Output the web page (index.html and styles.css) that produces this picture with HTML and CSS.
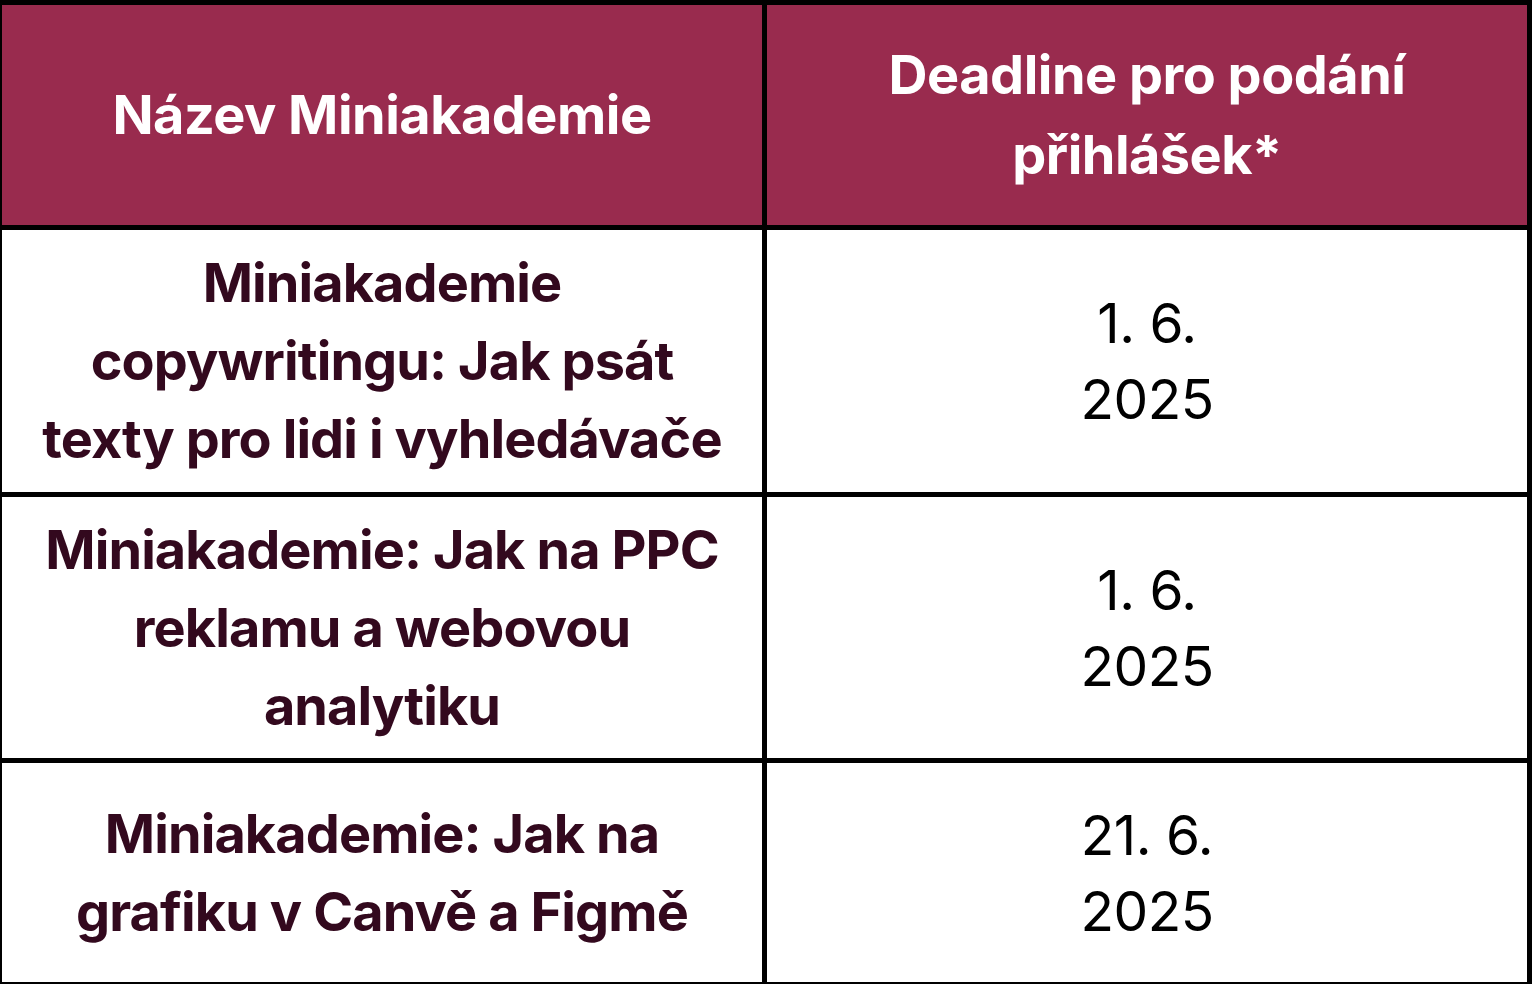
FILE: index.html
```html
<!DOCTYPE html>
<html lang="cs">
<head>
<meta charset="utf-8">
<title>Miniakademie</title>
<link rel="stylesheet" href="styles.css">
</head>
<body>
<div class="table" role="table">
  <div class="cell head" role="columnheader">Název Miniakademie</div>
  <div class="cell head" role="columnheader">Deadline pro podání<br>přihlášek*</div>
  <div class="cell name" role="cell">Miniakademie<br>copywritingu: Jak psát<br>texty pro lidi i vyhledávače</div>
  <div class="cell date" role="cell">1. 6.<br>2025</div>
  <div class="cell name" role="cell">Miniakademie: Jak na PPC<br>reklamu a webovou<br>analytiku</div>
  <div class="cell date" role="cell">1. 6.<br>2025</div>
  <div class="cell name" role="cell">Miniakademie: Jak na<br>grafiku v Canvě a Figmě</div>
  <div class="cell date" role="cell">21. 6.<br>2025</div>
</div>
</body>
</html>
```
FILE: styles.css
```css
html, body {
  margin: 0;
  padding: 0;
  background: #ffffff;
  overflow: hidden;
}
body {
  width: 1532px;
  height: 984px;
}
.table {
  width: 1535px;
  margin-left: -3px;
  box-sizing: border-box;
  padding: 5px;
  background: #000;
  display: grid;
  grid-template-columns: 1fr 1fr;
  grid-template-rows: 220px 262px 261px 219px;
  gap: 5px;
}
.cell {
  display: flex;
  align-items: center;
  justify-content: center;
  text-align: center;
  background: #fff;
  padding: 0 10px;
  white-space: nowrap;
  font-family: Inter, "Liberation Sans", sans-serif;
}
.head {
  background: #992b4e;
  color: #ffffff;
  font-weight: 700;
  font-size: 54px;
  line-height: 80px;
  letter-spacing: -0.5px;
}
.name {
  color: #33091e;
  font-weight: 700;
  font-size: 54px;
  line-height: 78px;
  letter-spacing: -0.9px;
}
.date {
  color: #000;
  font-weight: 400;
  font-size: 55px;
  line-height: 76px;
  letter-spacing: -0.5px;
}
```
